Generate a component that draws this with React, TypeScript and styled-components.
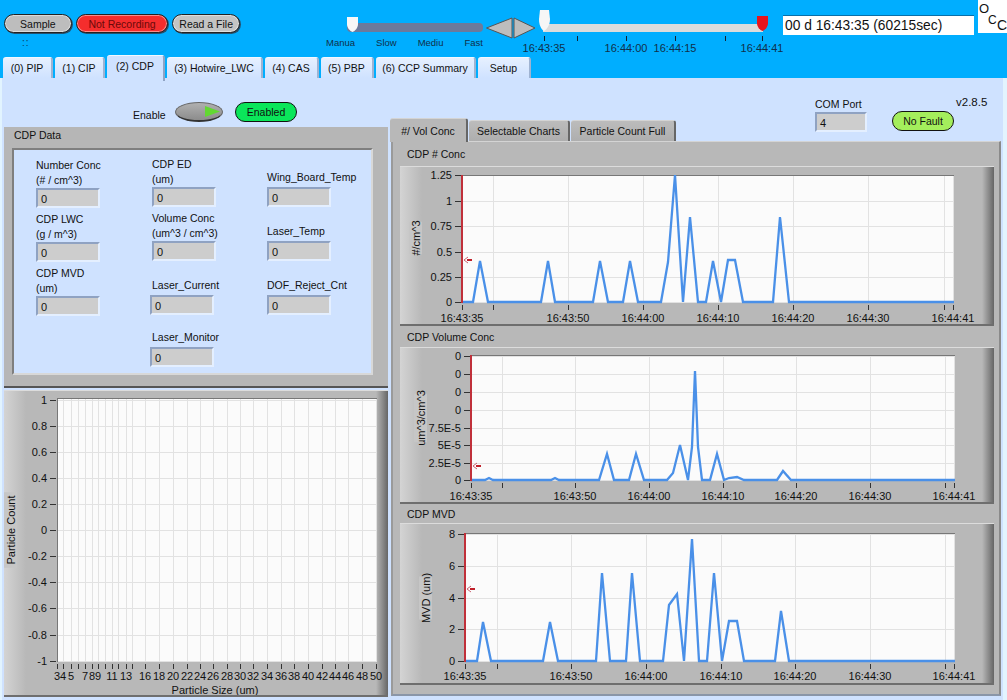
import React from 'react'
import styled, { createGlobalStyle } from 'styled-components'

const GlobalStyle = createGlobalStyle`
    html, body {
        margin: 0;
        padding: 0;
        background: #e2f4ff;
    }
    body {
        font-family: 'Liberation Sans', Arial, sans-serif;
        font-size: 10.5px;
        color: #111;
    }
`

const Page = styled.div`
    width: 1007px;
    height: 700px;
    overflow: hidden;
    display: flex;
    flex-direction: column;
`
const TopArea = styled.div`
    background: #00aeff;
    height: 78px;
    flex: none;
`
const Header = styled.div`
    height: 55px;
    display: flex;
    align-items: flex-start;
`
const ButtonGroup = styled.div`
    width: 236px;
    margin-left: 4px;
    padding-top: 14px;
`
const ButtonRow = styled.div`
    display: flex;
    gap: 4px;
`
const PillButton = styled.div<{ $w: number; $color: string; $text?: string }>`
    width: ${p => p.$w}px;
    height: 19px;
    box-sizing: border-box;
    border-radius: 10px;
    border: 1px solid #222;
    background: ${p => p.$color};
    color: ${p => p.$text || '#111'};
    box-shadow: inset 0 0 0 1px rgba(255, 255, 255, 0.45), 1px 1px 0 #24506e;
    display: flex;
    align-items: center;
    justify-content: center;
    font-size: 10.5px;
`
const Dots = styled.div`
    margin: 4px 0 0 18px;
    font-size: 10px;
    color: #0a3a58;
    letter-spacing: 1px;
`
const SpeedGroup = styled.div`
    width: 160px;
    margin-left: 86px;
    padding-top: 16px;
`
const SpeedTrack = styled.div`
    position: relative;
    margin: 7px 0 0 21px;
    width: 136px;
    height: 9px;
    border-radius: 4px;
    background: #6c7a9c;
`
const SpeedLabels = styled.div`
    display: flex;
    justify-content: space-between;
    width: 157px;
    margin-top: 5px;
    font-size: 9.5px;
    color: #10304a;
`
const ThumbSvg = styled.svg<{ $left: number; $top: number }>`
    position: absolute;
    left: ${p => p.$left}px;
    top: ${p => p.$top}px;
`
const ArrowSvg = styled.svg`
    width: 50px;
    height: 22px;
    margin-top: 17px;
    flex: none;
`
const TimeGroup = styled.div`
    width: 245px;
    margin-left: 2px;
    padding-top: 24px;
    position: relative;
    height: 31px;
    box-sizing: border-box;
`
const TimeTrack = styled.div`
    margin-left: 5px;
    width: 220px;
    height: 8px;
    background: #dcdcdc;
`
const ScaleTick = styled.div<{ $x: number }>`
    position: absolute;
    left: ${p => p.$x}px;
    top: 36px;
    width: 1px;
    height: 5px;
    background: #123;
`
const ScaleLabel = styled.div<{ $x: number }>`
    position: absolute;
    left: ${p => p.$x}px;
    top: 42px;
    transform: translateX(-50%);
    color: #10304a;
    font-size: 11px;
`
const TimeReadout = styled.div`
    width: 191px;
    height: 20px;
    margin-top: 15px;
    box-sizing: border-box;
    padding-left: 2px;
    background: #fff;
    border-top: 1px solid #0a6fa8;
    font-size: 13.8px;
    line-height: 20px;
    white-space: nowrap;
    flex: none;
`
const Logo = styled.div`
    width: 29px;
    height: 33px;
    margin-left: 4px;
    flex: none;
    background: #fff;
    display: flex;
    padding-left: 1px;
    box-sizing: border-box;
`
const LogoLetter = styled.span<{ $top: number; $size: number }>`
    margin-top: ${p => p.$top}px;
    width: 9px;
    height: 13px;
    font-size: ${p => p.$size}px;
    line-height: 13px;
`
const MainTabs = styled.div`
    height: 23px;
    margin-left: 3px;
    display: flex;
    align-items: flex-end;
    gap: 2px;
`
const MainTab = styled.div<{ $w: number; $active?: boolean }>`
    width: ${p => p.$w}px;
    height: ${p => (p.$active ? 26 : 21)}px;
    margin-bottom: ${p => (p.$active ? -3 : 0)}px;
    position: relative;
    box-sizing: border-box;
    background: ${p => (p.$active ? '#cfe2ff' : 'linear-gradient(#e6f0ff, #cfe2ff)')};
    border-top: 1px solid #f2f8ff;
    border-right: 2px solid ${p => (p.$active ? '#8fa3c4' : '#9fb3d2')};
    border-radius: 3px 3px 0 0;
    display: flex;
    align-items: center;
    justify-content: center;
    padding-bottom: ${p => (p.$active ? 6 : 0)}px;
    font-size: 10.5px;
`
const Body = styled.div`
    flex: 1;
    margin: 0 4px 0 2px;
    background: #cfe2ff;
    display: flex;
    min-height: 0;
`
const LeftColumn = styled.div`
    width: 384px;
    margin-left: 2px;
    flex: none;
    display: flex;
    flex-direction: column;
`
const EnableRow = styled.div`
    height: 49px;
    box-sizing: border-box;
    padding: 24px 0 0 129px;
    display: flex;
    align-items: flex-start;
`
const EnableLabel = styled.div`
    margin-top: 7px;
    width: 42px;
    font-size: 10.5px;
`
const Toggle = styled.div`
    width: 48px;
    height: 20px;
    border-radius: 50%;
    background: linear-gradient(#b0b0b0, #8c8c8c);
    border: 1px solid #666;
    border-bottom: 2px solid #333;
    box-sizing: border-box;
    display: flex;
    align-items: center;
    justify-content: flex-end;
    padding-right: 2px;
`
const Pill = styled.div<{ $w: number; $color: string }>`
    width: ${p => p.$w}px;
    height: 20px;
    box-sizing: border-box;
    border-radius: 10px;
    border: 1px solid #111;
    background: ${p => p.$color};
    display: flex;
    align-items: center;
    justify-content: center;
    font-size: 10.5px;
`
const EnabledPill = styled(Pill)`
    margin-left: 12px;
`
const DataGroup = styled.div`
    height: 261px;
    box-sizing: border-box;
    background: #b6b6b6;
    border-bottom: 2px solid #555;
    padding: 0 15px 0 8px;
`
const GroupTitle = styled.div`
    height: 21px;
    line-height: 16px;
    font-size: 10.5px;
    margin-left: 2px;
`
const DataInner = styled.div`
    height: 227px;
    box-sizing: border-box;
    background: #cfe2ff;
    border-top: 2px solid #7f7f7f;
    border-left: 2px solid #7f7f7f;
    border-right: 2px solid #d8d8d8;
    border-bottom: 2px solid #d8d8d8;
    display: grid;
    grid-template-columns: 116px 115px 1fr;
    padding-left: 22px;
`
const FieldColumn = styled.div`
    display: flex;
    flex-direction: column;
`
const Field = styled.div<{ $top: number }>`
    margin-top: ${p => p.$top}px;
`
const FieldLabel = styled.div`
    line-height: 15px;
    font-size: 10.5px;
    white-space: nowrap;
`
const FieldBox = styled.div<{ $gap?: number; $shift?: number }>`
    width: 64px;
    height: 20px;
    box-sizing: border-box;
    margin-top: ${p => p.$gap || 0}px;
    margin-left: ${p => p.$shift || 0}px;
    background: #cdcdcd;
    border-top: 2px solid #8fa2c2;
    border-left: 2px solid #8fa2c2;
    border-right: 2px solid #e4efff;
    border-bottom: 2px solid #e4efff;
    padding-left: 3px;
    line-height: 18px;
    font-size: 11px;
`
const GraphFrame = styled.div<{ $h: number }>`
    height: ${p => p.$h}px;
    box-sizing: border-box;
    background: linear-gradient(90deg, #d4d4d4, #b8b8b8 22px, #b8b8b8 calc(100% - 12px), #666);
    border-top: 1px solid #dcdcdc;
    border-bottom: 2px solid #6e6e6e;
    svg {
        display: block;
    }
`
const LeftGraph = styled.div`
    margin-top: 2px;
`
const RightColumn = styled.div`
    flex: 1;
    min-width: 0;
    margin-left: 2px;
    display: flex;
    flex-direction: column;
`
const StatusRow = styled.div`
    height: 41px;
    display: flex;
    align-items: flex-start;
`
const ComBlock = styled.div`
    margin: 20px 0 0 425px;
    width: 77px;
    font-size: 10.5px;
    line-height: 13px;
`
const ComBox = styled(FieldBox)`
    width: 52px;
    margin-top: 1px;
`
const StatusRight = styled.div`
    display: flex;
    align-items: flex-start;
    margin-top: 33px;
`
const Version = styled.div`
    margin: -15px 0 0 2px;
    font-size: 11.5px;
`
const ChartTabs = styled.div`
    height: 22px;
    display: flex;
    align-items: flex-end;
    gap: 1px;
`
const ChartTab = styled.div<{ $w: number; $active?: boolean }>`
    width: ${p => p.$w}px;
    height: ${p => (p.$active ? 24 : 21)}px;
    margin-bottom: ${p => (p.$active ? -1 : 0)}px;
    position: relative;
    box-sizing: border-box;
    background: ${p => (p.$active ? '#b8b8b8' : 'linear-gradient(#bcbcbc, #aeaeae)')};
    border-top: 1px solid #d4d4d4;
    border-right: 2px solid #666;
    border-radius: 3px 3px 0 0;
    display: flex;
    align-items: center;
    justify-content: center;
    font-size: 10.5px;
`
const ChartPanel = styled.div`
    height: 555px;
    width: 610px;
    margin-left: 1px;
    box-sizing: border-box;
    background: #b8b8b8;
    border-top: 1px solid #d4d4d4;
    border-right: 2px solid #8a8a8a;
    border-left: 2px solid #9a9a9a;
    border-bottom: 2px solid #8a96a8;
    padding: 0 5px 0 7px;
`
const ChartTitle = styled.div<{ $h: number }>`
    height: ${p => p.$h}px;
    display: flex;
    align-items: center;
    padding-left: 7px;
    font-size: 10.5px;
`

type Tick = { at: number; label?: string }

interface ChartProps {
    x: number
    y: number
    w: number
    h: number
    left: number
    top: number
    right: number
    bottom: number
    yTicks: Tick[]
    xTicks: Tick[]
    xLabelY: number
    yTitle: string
    yTitleX: number
    yTitleY: number
    points?: string
    cursorY?: number
    xTitle?: string
}

const Chart: React.FC<ChartProps> = ({ x, y, w, h, left, top, right, bottom, yTicks, xTicks, xLabelY, yTitle, yTitleX, yTitleY, points, cursorY, xTitle }) => {
    return (
        <svg width={w} height={h - 3} viewBox={`${x} ${y} ${w} ${h - 3}`} fontFamily="'Liberation Sans', Arial, sans-serif" fontSize="11" fill="#111">
            <rect x={left} y={top} width={right - left} height={bottom - top} fill="#fbfbfb" />
            {yTicks.map((t, i) => (
                <g key={i}>
                    <line x1={left} x2={right} y1={t.at + 0.5} y2={t.at + 0.5} stroke="#e2e2e2" />
                    <line x1={left - 7} x2={left - 1} y1={t.at + 0.5} y2={t.at + 0.5} stroke="#333" />
                    <text x={left - 10} y={t.at + 4} textAnchor="end">{t.label}</text>
                </g>
            ))}
            {xTicks.map((t, i) => (
                <g key={i}>
                    <line x1={t.at + 0.5} x2={t.at + 0.5} y1={top} y2={bottom} stroke="#e2e2e2" />
                    <line x1={t.at + 0.5} x2={t.at + 0.5} y1={bottom + 2} y2={bottom + 7} stroke="#333" />
                    {t.label && <text x={t.at} y={xLabelY} textAnchor="middle">{t.label}</text>}
                </g>
            ))}
            <line x1={left} x2={right} y1={top + 0.5} y2={top + 0.5} stroke="#777" />
            {points && <polyline points={points} fill="none" stroke="#4a90e8" strokeWidth="2.3" />}
            <rect x={yTitleX - 7} y={yTitleY - yTitle.length * 2.7} width={13} height={yTitle.length * 5.4} fill="#c6c6c6" />
            <text transform={`translate(${yTitleX + 4} ${yTitleY}) rotate(-90)`} textAnchor="middle">{yTitle}</text>
            {cursorY !== undefined ? (
                <g>
                    <line x1={left} x2={left} y1={top} y2={bottom} stroke="#c0303a" strokeWidth="2" />
                    <path d={`M${left + 6} ${cursorY - 3}L${left + 2} ${cursorY}L${left + 6} ${cursorY + 3}`} fill="#fff" stroke="#c86070" />
                    <rect x={left + 5} y={cursorY - 1} width={5} height={2} fill="#c0202a" />
                </g>
            ) : (
                <line x1={left + 0.5} x2={left + 0.5} y1={top} y2={bottom} stroke="#777" />
            )}
            {xTitle && <text x={215} y={694} textAnchor="middle">{xTitle}</text>}
        </svg>
    )
}

const fieldColumns: { top: number; labels: string[]; gap?: number; shift?: number }[][] = [
    [
        { top: 8, labels: ['Number Conc', '(# / cm^3)'] },
        { top: 4, labels: ['CDP LWC', '(g / m^3)'] },
        { top: 4, labels: ['CDP MVD', '(um)'] },
    ],
    [
        { top: 7, labels: ['CDP ED', '(um)'] },
        { top: 4, labels: ['Volume Conc', '(um^3 / cm^3)'] },
        { top: 17, labels: ['Laser_Current'], gap: 2, shift: -2 },
        { top: 15, labels: ['Laser_Monitor'], gap: 2, shift: -2 },
    ],
    [
        { top: 20, labels: ['Wing_Board_Temp'], gap: 2 },
        { top: 17, labels: ['Laser_Temp'], gap: 2 },
        { top: 17, labels: ['DOF_Reject_Cnt'], gap: 2 },
    ],
]

const mainTabs = [
    { name: '(0) PIP', w: 50 },
    { name: '(1) CIP', w: 50 },
    { name: '(2) CDP', w: 58, active: true },
    { name: '(3) Hotwire_LWC', w: 96 },
    { name: '(4) CAS', w: 54 },
    { name: '(5) PBP', w: 53 },
    { name: '(6) CCP Summary', w: 100 },
    { name: 'Setup', w: 53 },
]

// slider scale, offsets from the left of the time group (x = 538)
const scaleTicks = [6, 39, 88, 137, 187, 224]
const scaleLabels = [
    { x: 6, text: '16:43:35' },
    { x: 88, text: '16:44:00' },
    { x: 137, text: '16:44:15' },
    { x: 224, text: '16:44:41' },
]

const sizeGrid = [170, 190, 212, 233, 254, 275, 295, 315, 336, 355, 377, 395, 436, 476, 518, 560, 600, 640, 680, 720, 760, 800, 842, 883, 923, 965, 1005, 1045, 1085, 1128]
const sizeLabels: Record<number, string> = {
    170: '3', 190: '4', 212: '5', 254: '7', 275: '8', 295: '9', 336: '11', 377: '13', 436: '16', 476: '18', 518: '20',
    560: '22', 600: '24', 640: '26', 680: '28', 720: '30', 760: '32', 800: '34', 842: '36', 883: '38', 923: '40',
    965: '42', 1005: '44', 1045: '46', 1085: '48', 1128: '50',
}
const countTicks = [
    [400, '1'], [426, '0.8'], [452, '0.6'], [478, '0.4'], [504, '0.2'], [530, '0'],
    [556, '-0.2'], [582, '-0.4'], [608, '-0.6'], [635, '-0.8'], [661, '-1'],
].map(([at, label]) => ({ at: at as number, label: label as string }))

const App: React.FC = () => {
    return (
        <Page>
            <GlobalStyle />
            <TopArea>
                <Header>
                    <ButtonGroup>
                        <ButtonRow>
                            <PillButton $w={68} $color="#bdbdbd">Sample</PillButton>
                            <PillButton $w={93} $color="#f52d2d" $text="#6a0a0a">Not Recording</PillButton>
                            <PillButton $w={68} $color="#c4c4c4">Read a File</PillButton>
                        </ButtonRow>
                        <Dots>::</Dots>
                    </ButtonGroup>
                    <SpeedGroup>
                        <SpeedTrack>
                            <ThumbSvg $left={-1} $top={-7} width="13" height="17" viewBox="0 0 13 17">
                                <path d="M1 1h11v7c0 4-3 7-5.500 8C4 15 1 12 1 8z" fill="#f8f8f8" />
                            </ThumbSvg>
                        </SpeedTrack>
                        <SpeedLabels>
                            <span>Manua</span>
                            <span>Slow</span>
                            <span>Mediu</span>
                            <span>Fast</span>
                        </SpeedLabels>
                    </SpeedGroup>
                    <ArrowSvg viewBox="0 0 50 22">
                        <path d="M0.500 11L26 1v20z" fill="#bdbdbd" stroke="#555" />
                        <path d="M28 1l21 10-21 10z" fill="#bdbdbd" stroke="#555" />
                    </ArrowSvg>
                    <TimeGroup>
                        <TimeTrack />
                        <ThumbSvg $left={0} $top={9} width="13" height="23" viewBox="0 0 13 23">
                            <path d="M2 1h9l1 9c0 6-3 10-6 12C3 20 1 16 1 10z" fill="#f6f6f6" />
                        </ThumbSvg>
                        <ThumbSvg $left={218} $top={15} width="13" height="17" viewBox="0 0 13 17">
                            <path d="M1 1h11v7c0 4-3 7-5.500 8C4 15 1 12 1 8z" fill="#e8141c" />
                        </ThumbSvg>
                        {scaleTicks.map(x => <ScaleTick key={x} $x={x} />)}
                        {scaleLabels.map(l => <ScaleLabel key={l.x} $x={l.x}>{l.text}</ScaleLabel>)}
                    </TimeGroup>
                    <TimeReadout>00 d 16:43:35 (60215sec)</TimeReadout>
                    <Logo>
                        <LogoLetter $top={2} $size={13}>O</LogoLetter>
                        <LogoLetter $top={14} $size={12}>C</LogoLetter>
                        <LogoLetter $top={19} $size={14}>C</LogoLetter>
                    </Logo>
                </Header>
                <MainTabs>
                    {mainTabs.map(t => (
                        <MainTab key={t.name} $w={t.w} $active={t.active}>{t.name}</MainTab>
                    ))}
                </MainTabs>
            </TopArea>
            <Body>
                <LeftColumn>
                    <EnableRow>
                        <EnableLabel>Enable</EnableLabel>
                        <Toggle>
                            <svg width="15" height="11" viewBox="0 0 15 11">
                                <path d="M0 0l15 5.500L0 11z" fill="#62d832" />
                            </svg>
                        </Toggle>
                        <EnabledPill $w={62} $color="#0ae65a">Enabled</EnabledPill>
                    </EnableRow>
                    <DataGroup>
                        <GroupTitle>CDP Data</GroupTitle>
                        <DataInner>
                            {fieldColumns.map((col, c) => (
                                <FieldColumn key={c}>
                                    {col.map(f => (
                                        <Field key={f.labels[0]} $top={f.top}>
                                            {f.labels.map(l => <FieldLabel key={l}>{l}</FieldLabel>)}
                                            <FieldBox $gap={f.gap} $shift={f.shift}>0</FieldBox>
                                        </Field>
                                    ))}
                                </FieldColumn>
                            ))}
                        </DataInner>
                    </DataGroup>
                    <LeftGraph>
                        <GraphFrame $h={307}>
                            <Chart
                                x={4} y={391} w={384} h={307}
                                left={57} top={398} right={377} bottom={662}
                                yTicks={countTicks}
                                xTicks={sizeGrid.map(z => ({ at: Math.round(z / 3), label: sizeLabels[z] }))}
                                xLabelY={680}
                                yTitle="Particle Count"
                                yTitleX={11}
                                yTitleY={530}
                                xTitle="Particle Size (um)"
                            />
                        </GraphFrame>
                    </LeftGraph>
                </LeftColumn>
                <RightColumn>
                    <StatusRow>
                        <ComBlock>
                            COM Port
                            <ComBox>4</ComBox>
                        </ComBlock>
                        <StatusRight>
                            <Pill $w={62} $color="#a4ee5c">No Fault</Pill>
                            <Version>v2.8.5</Version>
                        </StatusRight>
                    </StatusRow>
                    <ChartTabs>
                        <ChartTab $w={78} $active>#/ Vol Conc</ChartTab>
                        <ChartTab $w={101}>Selectable Charts</ChartTab>
                        <ChartTab $w={105}>Particle Count Full</ChartTab>
                    </ChartTabs>
                    <ChartPanel>
                        <ChartTitle $h={24}>CDP # Conc</ChartTitle>
                        <GraphFrame $h={160}>
                            <Chart
                                x={400} y={167} w={594} h={160}
                                left={462} top={175} right={954} bottom={303}
                                yTicks={[
                                    { at: 175, label: '1.25' }, { at: 201, label: '1' }, { at: 226, label: '0.75' },
                                    { at: 252, label: '0.5' }, { at: 277, label: '0.25' }, { at: 302, label: '0' },
                                ]}
                                xTicks={[
                                    { at: 462, label: '16:43:35' }, { at: 493 }, { at: 568, label: '16:43:50' }, { at: 643, label: '16:44:00' },
                                    { at: 718, label: '16:44:10' }, { at: 793, label: '16:44:20' }, { at: 868, label: '16:44:30' }, { at: 944 },
                                    { at: 953, label: '16:44:41' },
                                ]}
                                xLabelY={322}
                                yTitle="#/cm^3"
                                yTitleX={416}
                                yTitleY={238}
                                cursorY={260}
                                points="462,302 473,302 480,261 488,302 541,302 548,261 555,302 593,302 600,261 608,302 623,302 630,261 638,302 661,302 668,262 675,175 683,302 690,217 698,302 706,302 713,261 721,302 728,260 735,260 743,302 773,302 780,217 789,302 954,302"
                            />
                        </GraphFrame>
                        <ChartTitle $h={21}>CDP Volume Conc</ChartTitle>
                        <GraphFrame $h={157}>
                            <Chart
                                x={400} y={348} w={594} h={157}
                                left={471} top={355} right={955} bottom={481}
                                yTicks={[
                                    { at: 356, label: '0' }, { at: 374, label: '0' }, { at: 392, label: '0' }, { at: 410, label: '0' },
                                    { at: 428, label: '7.5E-5' }, { at: 445, label: '5E-5' }, { at: 463, label: '2.5E-5' }, { at: 480, label: '0' },
                                ]}
                                xTicks={[
                                    { at: 471, label: '16:43:35' }, { at: 502 }, { at: 575, label: '16:43:50' }, { at: 649, label: '16:44:00' },
                                    { at: 723, label: '16:44:10' }, { at: 796, label: '16:44:20' }, { at: 870, label: '16:44:30' }, { at: 945 },
                                    { at: 954, label: '16:44:41' },
                                ]}
                                xLabelY={500}
                                yTitle="um^3/cm^3"
                                yTitleX={421}
                                yTitleY={418}
                                cursorY={466}
                                points="471,480 485,480 489,478 493,480 551,480 555,478 559,480 599,480 607,454 614,480 629,480 636,454 644,480 667,480 673,473 680,445 688,480 692,447 695,371 698,447 702,480 710,480 717,454 724,480 729,478 737,477 744,480 777,480 783,471 791,480 955,480"
                            />
                        </GraphFrame>
                        <ChartTitle $h={19}>CDP MVD</ChartTitle>
                        <GraphFrame $h={162}>
                            <Chart
                                x={400} y={524} w={594} h={162}
                                left={465} top={533} right={955} bottom={662}
                                yTicks={[
                                    { at: 534, label: '8' }, { at: 566, label: '6' }, { at: 598, label: '4' },
                                    { at: 629, label: '2' }, { at: 661, label: '0' },
                                ]}
                                xTicks={[
                                    { at: 465, label: '16:43:35' }, { at: 497 }, { at: 571, label: '16:43:50' }, { at: 646, label: '16:44:00' },
                                    { at: 721, label: '16:44:10' }, { at: 795, label: '16:44:20' }, { at: 870, label: '16:44:30' }, { at: 945 },
                                    { at: 954, label: '16:44:41' },
                                ]}
                                xLabelY={680}
                                yTitle="MVD (um)"
                                yTitleX={426}
                                yTitleY={598}
                                cursorY={589}
                                points="465,661 477,661 483,622 491,661 543,661 550,622 558,661 596,661 602,573 610,661 626,661 632,573 640,661 663,661 669,605 677,594 684,661 692,539 699,661 707,661 714,573 722,661 729,621 737,621 744,661 775,661 781,611 789,661 955,661"
                            />
                        </GraphFrame>
                    </ChartPanel>
                </RightColumn>
            </Body>
        </Page>
    )
}

export default App
